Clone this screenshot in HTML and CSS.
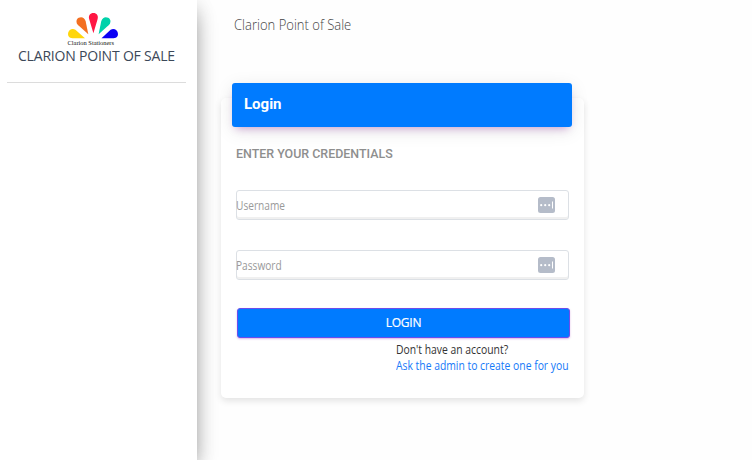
FILE: index.html
```html
<!DOCTYPE html>
<html lang="en">
<head>
<meta charset="utf-8">
<title>Clarion Point of Sale</title>
<link rel="stylesheet" href="styles.css">
</head>
<body>
<div class="app">
  <aside class="sidebar">
    <div class="brand">
      <svg class="logo" width="54" height="34" viewBox="66 12 54 34">
        <path fill="#ff1744" d="M93.4 33.2L89.3 19.5C88 15.5 90.2 13 93.4 13s5.4 2.500 4.100 6.500z"/>
        <path fill="#f36f21" d="M88.300 34.300L78.300 25.300C75.600 22.700 76 19.200 78.700 17.800s5.800-.4 6.900 3.200z"/>
        <path fill="#00d2aa" d="M98.600 34.300L108.600 25.300C111.300 22.700 110.900 19.200 108.200 17.800s-5.800-.4-6.900 3.200z"/>
        <path fill="#ffd60a" d="M85 38.200H72.500C69 38.200 67.500 35.600 68.200 32.800s3.800-4.800 7.200-3z"/>
        <path fill="#0b00f4" d="M101.500 38.200H113.500C117 38.200 118.500 35.600 117.800 32.800s-3.800-4.800-7.200-3z"/>
        <text class="logo-text" x="67.500" y="44.500" textLength="46.500" lengthAdjust="spacingAndGlyphs">Clarion Stationers</text>
      </svg>
      <div class="brand-name">CLARION POINT OF SALE</div>
    </div>
  </aside>
  <main class="main">
    <div class="page-title">Clarion Point of Sale</div>
    <section class="card">
      <header class="card-header">Login</header>
      <form class="form">
        <h2 class="prompt">ENTER YOUR CREDENTIALS</h2>
        <div class="field"><span class="placeholder">Username</span>
          <svg class="key" width="17" height="16" viewBox="0 0 17 16"><rect width="17" height="16" rx="2.500" fill="#b5bcc9"/><g fill="#fff"><circle cx="3.200" cy="8.200" r="1.100"/><circle cx="7.200" cy="8.200" r="1.100"/><circle cx="11.200" cy="8.200" r="1.100"/><rect x="14" y="4.500" width="1" height="7"/></g></svg>
        </div>
        <div class="field"><span class="placeholder">Password</span>
          <svg class="key" width="17" height="16" viewBox="0 0 17 16"><rect width="17" height="16" rx="2.500" fill="#b5bcc9"/><g fill="#fff"><circle cx="3.200" cy="8.200" r="1.100"/><circle cx="7.200" cy="8.200" r="1.100"/><circle cx="11.200" cy="8.200" r="1.100"/><rect x="14" y="4.500" width="1" height="7"/></g></svg>
        </div>
        <button class="submit" type="button">LOGIN</button>
        <div class="help">
          <div class="question">Don't have an account?</div>
          <a class="ask">Ask the admin to create one for you</a>
        </div>
      </form>
    </section>
  </main>
</div>
</body>
</html>
```
FILE: styles.css
```css
* { box-sizing: border-box; }
body {
  margin: 0;
  background: #fefefe;
  font-family: "Open Sans", "Noto Sans", sans-serif;
  overflow: hidden;
}
.app { display: flex; height: 460px; }
.sidebar {
  width: 197px;
  flex: none;
  padding: 12px 11px 0 7px;
  background: #fff;
  box-shadow: 0 10px 22px -5px rgba(0, 0, 0, .45), 0 4px 18px rgba(0, 0, 0, .12);
}
.brand {
  height: 71px;
  border-bottom: 1px solid #dcdcdc;
}
.logo { display: block; margin-left: 59px; }
.logo-text { font: 6px "Liberation Serif", serif; fill: #111; }
.brand-name {
  margin-left: 11px;
  font-size: 14px;
  line-height: 20px;
  letter-spacing: -.2px;
  color: #3c4858;
  white-space: nowrap;
}
.main { flex: 1; padding: 14px 0 0 24px; }
.page-title {
  margin-left: 13px;
  height: 22px;
  font-size: 14px;
  font-weight: 300;
  line-height: 22px;
  color: #444;
  transform: scaleX(.93);
  transform-origin: left;
}
.card {
  width: 363px;
  height: 300px;
  margin-top: 62px;
  padding: 0 12px 0 11px;
  border-radius: 5px;
  background: #fff;
  box-shadow: 0 3px 7px rgba(0, 0, 0, .11);
}
.card-header {
  position: relative;
  top: -15px;
  height: 44px;
  padding: 11px 12px;
  border-radius: 3px;
  background: #007bff;
  color: #fff;
  font: 700 15px/20px Roboto, sans-serif;
  box-shadow: 0 4px 18px rgba(0, 0, 0, .1), 0 5px 8px -4px rgba(156, 39, 176, .4);
}
.form { padding: 0 3px 0 4px; }
.prompt {
  margin: 0 0 28px;
  padding-top: 4px;
  height: 20px;
  font: 500 12.450px/16px Roboto, sans-serif;
  color: #8e8e8e;
}
.field {
  display: flex;
  align-items: center;
  justify-content: space-between;
  width: 332.500px;
  height: 30px;
  margin-bottom: 30px;
  padding: 0 13px 0 0;
  border: 1px solid #dce0e5;
  border-radius: 3px;
  background: #fff;
  box-shadow: inset 0 -2px #f0f0f0;
  color: #999;
  font-size: 12px;
}
.placeholder {
  margin-left: -1px;
  transform: scaleX(.845);
  transform-origin: left;
}
.submit {
  display: block;
  width: 333px;
  height: 30px;
  margin: -2px 0 0 1px;
  padding: 0;
  border: 1px solid #6c4cec;
  border-radius: 3px;
  background: #007bff;
  color: #fff;
  font: 12px/28px "Open Sans", sans-serif;
  letter-spacing: -.2px;
  -webkit-text-stroke: .2px #fff;
  box-shadow: 0 1px 2px rgba(156, 39, 176, .35);
}
.help {
  width: 190px;
  margin: 4px 0 0 159.500px;
  font-size: 12px;
  line-height: 16px;
  white-space: nowrap;
  transform: scaleX(.863);
  transform-origin: left;
}
.question { color: #333; }
.ask { display: block; color: #1679f8; }
```
